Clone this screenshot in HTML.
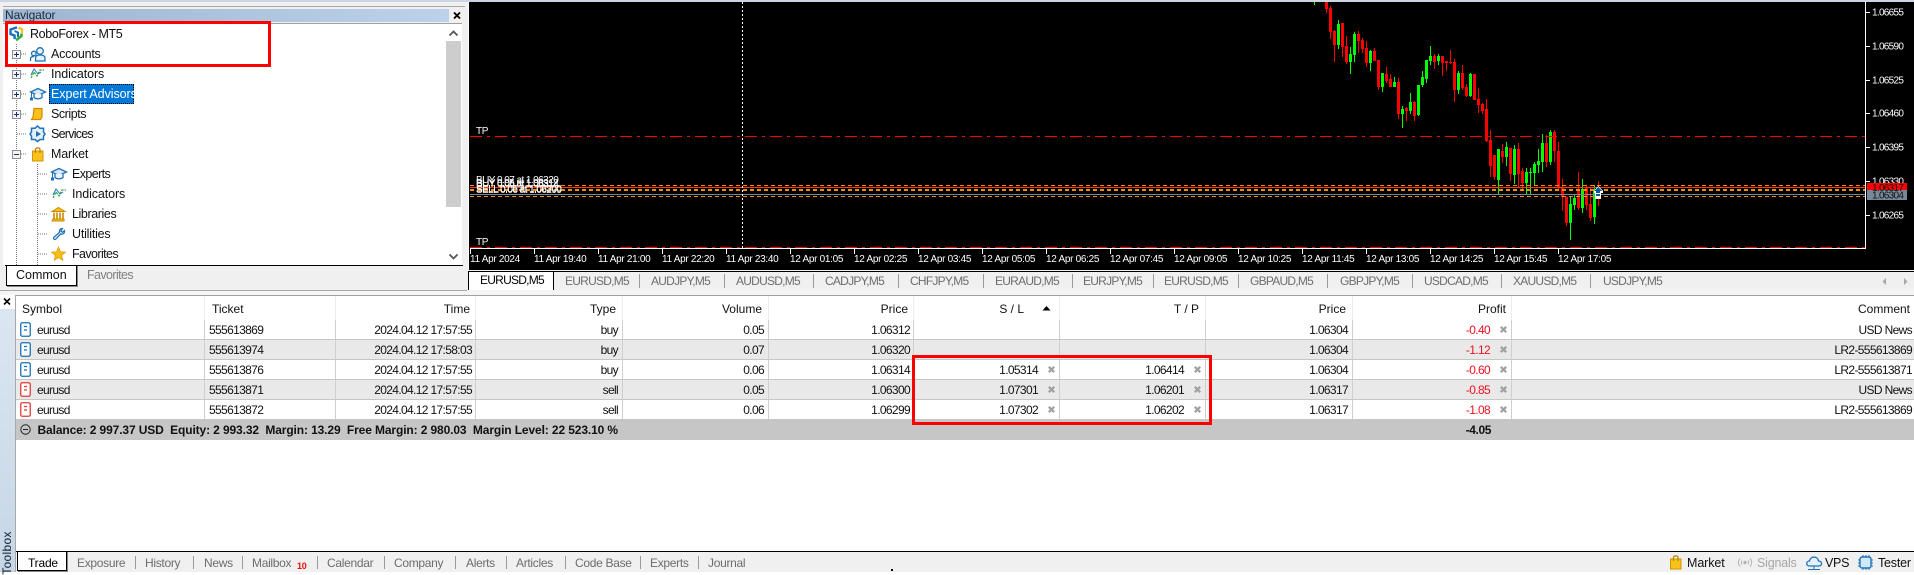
<!DOCTYPE html>
<html><head><meta charset="utf-8"><title>MT5</title>
<style>
html,body{margin:0;padding:0;width:1914px;height:572px;overflow:hidden;background:#fff;font-family:"Liberation Sans",sans-serif;color:#000}
.a{position:absolute}
.t{position:absolute;white-space:nowrap;font-size:12.5px;line-height:20px;letter-spacing:-.1px;color:#111}
.tab{position:absolute;white-space:nowrap;font-size:12px;line-height:18px;top:272px;letter-spacing:-.75px;color:#6d6d6d}
.sep{position:absolute;width:1px;background:#9a9a9a}
.bt{position:absolute;white-space:nowrap;font-size:12px;line-height:18px;top:554px;letter-spacing:-.3px;color:#6d6d6d}
table{position:absolute;left:16px;top:296px;width:1898px;border-collapse:separate;border-spacing:0;table-layout:fixed;font-size:12px;color:#111}
th{font-weight:normal;height:24px;padding:1px 4px 0 0;text-align:right;border-right:1px solid #ececec;background:#fff;box-sizing:border-box}
td{height:20px;padding:1px 4px 0 0;text-align:right;border-right:1px solid #cfcfcf;border-bottom:1px solid #c6c6c6;box-sizing:border-box;position:relative;letter-spacing:-.65px;white-space:nowrap}
tr.g td{background:#e9e9e9}
tr.last td{border-bottom:0;height:19px}
td.l,th.l{text-align:left}
td.x{padding-right:21px}
td.r{color:#f01020}
.x1{position:absolute;right:4px;top:6px;width:7px;height:7px}
.ic{position:absolute;left:4px;top:2px;width:11px;height:15px}
.sum td{background:#c6c6c6;border:0;height:21px;font-weight:bold;overflow:visible}
</style></head><body>

<!-- base chrome -->
<div class="a" style="left:0;top:0;width:1914px;height:2px;background:#ccd5e3"></div>
<div class="a" style="left:0;top:2px;width:468px;height:288px;background:#f0f0f0"></div>
<div class="a" style="left:3px;top:6px;width:462px;height:1px;background:#a8a8a8"></div>
<div class="a" style="left:3px;top:9px;width:446px;height:13px;background:linear-gradient(90deg,#9db5d0,#bcd2ea)"></div>
<div class="t" style="left:5px;top:5px;color:#1a2a3a;letter-spacing:-.1px;font-size:12px">Navigator</div>
<svg class="a" style="left:453px;top:12px" width="8" height="7"><path d="M1 0.5L7 6.5M7 0.5L1 6.5" stroke="#000" stroke-width="1.8"/></svg>
<div class="a" style="left:3px;top:23px;width:459px;height:242px;background:#fff;border-top:1px solid #a0a0a0;box-sizing:border-box"></div>
<div class="a" style="left:446px;top:24px;width:15px;height:241px;background:#fff"></div>
<div class="a" style="left:446px;top:41px;width:15px;height:166px;background:#cdcdcd"></div>
<svg class="a" style="left:448px;top:29px" width="11" height="8"><path d="M1.5 6.5L5.5 2.5L9.5 6.5" fill="none" stroke="#555" stroke-width="1.8"/></svg>
<svg class="a" style="left:448px;top:253px" width="11" height="8"><path d="M1.5 1.5L5.5 5.5L9.5 1.5" fill="none" stroke="#555" stroke-width="1.8"/></svg>
<div class="a" style="left:5px;top:265px;width:458px;height:1px;background:#000"></div>
<div class="a" style="left:6px;top:265px;width:71px;height:21px;background:#fff;border:1px solid #000;border-top:1px solid #000;box-sizing:border-box;box-shadow:1px 1px 0 #888"></div>
<div class="t" style="left:16px;top:265px;letter-spacing:0">Common</div>
<div class="t" style="left:87px;top:265px;color:#808080;letter-spacing:-.6px">Favorites</div>

<!-- nav tree -->
<svg class="a" style="left:0;top:0" width="468" height="290">
<defs>
<g id="plus"><rect x=".5" y=".5" width="8" height="8" fill="#f4f4f4" stroke="#8a8f98"/><path d="M2 4.5H7M4.5 2V7" stroke="#1b2f6a"/></g>
<g id="ind"><path d="M1 11L4 5L7 9L10 3L14 3" fill="none" stroke="#2aa84a" stroke-width="1.2" stroke-dasharray="2.5 1"/><path d="M1 8L4 2L8 7L11 5" fill="none" stroke="#1e74b8" stroke-width="1"/></g>
<g id="hat"><path d="M0.5 5L8 1.5L15.5 5L8 8.5Z" fill="#d5e9f7" stroke="#1f72b8" stroke-width="1.3"/><path d="M4 7V10.5C6 12.3 10 12.3 12 10.5V7" fill="#eef6fc" stroke="#1f72b8" stroke-width="1.3"/><path d="M1.5 5.5V10.5" stroke="#1f72b8"/><rect x="0" y="10.5" width="3" height="3" fill="#1f72b8"/></g>
<g id="bag"><rect x=".5" y="4" width="10.5" height="10" fill="#f9c21a" stroke="#d49400"/><path d="M3.5 6V2.5C3.5 .3 8 .3 8 2.5V6" fill="none" stroke="#b98000" stroke-width="1.2"/></g>
<g id="star"><path d="M6.5 0L8.5 4.7L13.5 5.1L9.7 8.3L10.9 13.4L6.5 10.6L2.1 13.4L3.3 8.3L-.5 5.1L4.5 4.7Z" fill="#f7bd16" stroke="#d79a00" stroke-width=".7"/></g>
</defs>
<path d="M16.5 44V170M16.5 170V265" stroke="#777" stroke-dasharray="1 1"/>
<path d="M37.5 164V265" stroke="#777" stroke-dasharray="1 1"/>
<path d="M21 54H27M21 74H27M21 94H27M21 114H27M17 134H27M21 154H27M38 174H48M38 194H48M38 214H48M38 234H48M38 254H48" stroke="#777" stroke-dasharray="1 1"/>
<use href="#plus" x="12" y="50"/><use href="#plus" x="12" y="70"/><use href="#plus" x="12" y="90"/><use href="#plus" x="12" y="110"/>
<g transform="translate(12 150)"><rect x=".5" y=".5" width="8" height="8" fill="#f4f4f4" stroke="#8a8f98"/><path d="M2 4.5H7" stroke="#1b2f6a"/></g>
<!-- logo -->
<g transform="translate(9 26)" fill="none"><path d="M8 1.2L1.5 3.6V8L5.6 9.6V13" stroke="#1a6fc0" stroke-width="2.4"/><path d="M9.5 1.5L13 3.4V7" stroke="#f4c21f" stroke-width="2.4"/><path d="M12.5 7.5V10L7 14.2" stroke="#2fae3f" stroke-width="2.6"/><path d="M5.5 5L9 6.5V11" stroke="#1a6fc0" stroke-width="2"/></g>
<!-- accounts -->
<g transform="translate(30 47)" fill="#e3f1fb" stroke="#1f72b8" stroke-width="1.3"><circle cx="10" cy="4" r="3.3"/><path d="M5.5 14V11C5.5 8.5 8 8 10 8C12 8 15 8.5 15 11V14Z"/><circle cx="3.8" cy="6.5" r="2.3"/><path d="M.5 14V11.5C.5 10 2 9.5 4 9.5"/></g>
<use href="#ind" x="30" y="67"/>
<use href="#hat" x="30" y="87"/>
<!-- scripts -->
<g transform="translate(31 108)"><path d="M3 .5H11V9L9.5 11.5H.5L2 9Z" fill="#f9c21a" stroke="#d48a00" stroke-width="1.2"/></g>
<!-- services -->
<g transform="translate(30 126)"><path d="M7.5 0L10 2.3H13.5V6L15 8L13.5 10V13.5H10L7.5 15.5L5 13.5H1.5V10L0 8L1.5 6V2.3H5Z" fill="#e3f1fb" stroke="#1f72b8" stroke-width="1.5"/><path d="M6 5L11 8L6 11Z" fill="#1f72b8"/></g>
<use href="#bag" x="32" y="147"/>
<use href="#hat" x="51" y="167"/>
<use href="#ind" x="52" y="187"/>
<!-- libraries -->
<g transform="translate(52 207)" fill="#f9c21a" stroke="#c98a00"><path d="M6.5 .5L13 4.5H0Z"/><path d="M1 12H12V14H0Z"/><path d="M2 5.5V11.5M5 5.5V11.5M8 5.5V11.5M11 5.5V11.5" stroke-width="1.6"/></g>
<!-- utilities -->
<g transform="translate(53 228)"><path d="M9 .5C7 .5 6 2.5 6.5 4.5L.8 9.3C-.2 10.5 1.5 12.3 2.7 11.2L7.8 6C10 6.8 12 5 11.5 2.5L9.5 4.2L7.8 3L9.5 .7Z" fill="#d8ecfa" stroke="#1f72b8" stroke-width="1.2"/></g>
<use href="#star" x="52" y="247"/>
</svg>
<div class="t" style="left:30px;top:24px;letter-spacing:-.37px">RoboForex - MT5</div>
<div class="t" style="left:51px;top:44px;letter-spacing:-.23px">Accounts</div>
<div class="t" style="left:51px;top:64px">Indicators</div>
<div class="a" style="left:49px;top:84px;width:85px;height:20px;background:#0078d7;outline:1px dotted #000;outline-offset:-1px"></div>
<div class="t" style="left:51px;top:84px;color:#fff;letter-spacing:-.07px">Expert Advisors</div>
<div class="t" style="left:51px;top:104px;letter-spacing:-.45px">Scripts</div>
<div class="t" style="left:51px;top:124px;letter-spacing:-.75px">Services</div>
<div class="t" style="left:51px;top:144px;letter-spacing:-.17px">Market</div>
<div class="t" style="left:72px;top:164px;letter-spacing:-.6px">Experts</div>
<div class="t" style="left:72px;top:184px">Indicators</div>
<div class="t" style="left:72px;top:204px;letter-spacing:-.4px">Libraries</div>
<div class="t" style="left:72px;top:224px;letter-spacing:-.2px">Utilities</div>
<div class="t" style="left:72px;top:244px;letter-spacing:-.6px">Favorites</div>
<div class="a" style="left:5px;top:21px;width:266px;height:46px;border:3px solid #f00;box-sizing:border-box"></div>

<!-- chart -->
<svg class="a" style="left:469px;top:2px" width="1445" height="268" viewBox="469 2 1445 268" font-family="Liberation Sans, sans-serif">
<rect x="469" y="2" width="1445" height="268" fill="#000"/>
<g shape-rendering="crispEdges" fill="none">
<g stroke="#f00" stroke-width="1">
<path d="M1326.5 0V13M1330.5 6V39M1334.5 30V62M1342.5 23V57M1346.5 36V64M1358.5 31V53M1362.5 38V53M1366.5 41V67M1374.5 48V61M1378.5 60V90M1386.5 67V83M1390.5 74V87M1398.5 78V119M1406.5 107V121M1414.5 101V121M1434.5 54V69M1442.5 56V76M1446.5 61V71M1450.5 50V64M1454.5 59V102M1462.5 65V90M1466.5 84V97M1474.5 74V100M1478.5 88V113M1482.5 103V114M1486.5 99V142M1490.5 130V177M1494.5 155V180M1502.5 144V163M1510.5 148V181M1518.5 143V187M1522.5 168V189M1546.5 135V167M1554.5 130V162M1558.5 142V189M1562.5 179V211M1566.5 197V226M1578.5 172V210M1586.5 186V210M1590.5 187V221M1598.5 181V206"/>
</g>
<g stroke="#f00" stroke-width="3">
<path d="M1326.5 0V9M1330.5 8V32M1334.5 31V45M1342.5 23V47M1346.5 46V62M1358.5 34V41M1362.5 40V49M1366.5 48V63M1374.5 51V61M1378.5 60V87M1386.5 74V81M1390.5 79V87M1398.5 82V114M1406.5 108V111M1414.5 102V116M1434.5 56V62M1442.5 56V63M1446.5 61V63M1450.5 62V63M1454.5 62V90M1462.5 73V88M1466.5 87V96M1474.5 74V100M1478.5 99V105M1482.5 104V111M1486.5 109V141M1490.5 140V166M1494.5 155V177M1502.5 151V157M1510.5 148V174M1518.5 149V174M1522.5 171V183M1546.5 143V162M1554.5 132V151M1558.5 151V188M1562.5 188V197M1566.5 197V223M1578.5 189V208M1586.5 187V205M1590.5 204V218"/>
</g>
<g stroke="#0f0" stroke-width="1">
<path d="M1314.5 2V5M1338.5 20V49M1350.5 47V74M1354.5 32V62M1370.5 50V71M1382.5 73V92M1394.5 77V87M1402.5 106V128M1410.5 93V114M1418.5 85V116M1422.5 71V87M1426.5 60V83M1430.5 46V65M1438.5 54V65M1458.5 71V94M1470.5 73V97M1498.5 149V194M1506.5 142V166M1514.5 145V184M1526.5 168V194M1530.5 168V194M1534.5 162V185M1538.5 149V173M1542.5 134V172M1550.5 130V165M1570.5 197V240M1574.5 194V210M1582.5 179V213M1594.5 185V224"/>
</g>
<g stroke="#0f0" stroke-width="3">
<path d="M1338.5 24V45M1350.5 54V62M1354.5 34V55M1370.5 51V63M1382.5 73V87M1394.5 82V87M1402.5 109V114M1410.5 102V111M1418.5 85V115M1422.5 77V85M1426.5 60V79M1430.5 56V61M1438.5 56V61M1458.5 73V90M1470.5 74V96M1498.5 149V180M1506.5 147V157M1514.5 149V175M1526.5 172V183M1530.5 172V173M1534.5 164V173M1538.5 161V165M1542.5 143V162M1550.5 132V162M1570.5 204V223M1574.5 198V205M1582.5 189V208M1594.5 189V217"/>
</g>
<!-- lines -->
<path d="M470 136.5H1865M470 247.5H1865" stroke="#f00" stroke-dasharray="12 5 3 5"/>
<path d="M470 185.5H1865M470 196.5H1865" stroke="#ff8c00" stroke-dasharray="4 3"/>
<path d="M470 187.5H1865" stroke="#ff3a00"/>
<path d="M470 190H1865" stroke="#ff8c00" stroke-width="2" stroke-dasharray="4 3"/>
<path d="M470 194.5H1865" stroke="#778899"/>
<path d="M742.5 2V248" stroke="#fff" stroke-dasharray="2 2"/>
<!-- axes -->
<path d="M470 248.5H1865.5M1865.5 2V249" stroke="#fff"/>
<path d="M470.5 249V254M534.5 249V254M598.5 249V254M662.5 249V254M726.5 249V254M790.5 249V254M854.5 249V254M918.5 249V254M982.5 249V254M1046.5 249V254M1110.5 249V254M1174.5 249V254M1238.5 249V254M1302.5 249V254M1366.5 249V254M1430.5 249V254M1494.5 249V254M1558.5 249V254" stroke="#fff"/>
<path d="M1866 12.5H1870M1866 46.5H1870M1866 80.5H1870M1866 113.5H1870M1866 147.5H1870M1866 181.5H1870M1866 215.5H1870" stroke="#fff"/>
</g>
<g fill="#fff" font-size="10" letter-spacing="-.3">
<text x="470" y="262">11 Apr 2024</text><text x="534" y="262">11 Apr 19:40</text><text x="598" y="262">11 Apr 21:00</text><text x="662" y="262">11 Apr 22:20</text><text x="726" y="262">11 Apr 23:40</text><text x="790" y="262">12 Apr 01:05</text><text x="854" y="262">12 Apr 02:25</text><text x="918" y="262">12 Apr 03:45</text><text x="982" y="262">12 Apr 05:05</text><text x="1046" y="262">12 Apr 06:25</text><text x="1110" y="262">12 Apr 07:45</text><text x="1174" y="262">12 Apr 09:05</text><text x="1238" y="262">12 Apr 10:25</text><text x="1302" y="262">12 Apr 11:45</text><text x="1366" y="262">12 Apr 13:05</text><text x="1430" y="262">12 Apr 14:25</text><text x="1494" y="262">12 Apr 15:45</text><text x="1558" y="262">12 Apr 17:05</text>
<g letter-spacing="-.7"><text x="1872" y="15.5">1.06655</text><text x="1872" y="49.5">1.06590</text><text x="1872" y="83.5">1.06525</text><text x="1872" y="116.5">1.06460</text><text x="1872" y="150.5">1.06395</text><text x="1872" y="184.5">1.06330</text><text x="1872" y="218.5">1.06265</text></g>
<text x="476" y="134">TP</text><text x="476" y="245">TP</text>
<g letter-spacing="-.55"><text x="476" y="183">BUY 0.07 at 1.06320</text><text x="476" y="186">BUY 0.05 at 1.06312</text><text x="476" y="187">BUY 0.06 at 1.06314</text><text x="476" y="192">SELL 0.05 at 1.06300</text><text x="476" y="193">SELL 0.06 at 1.06299</text></g>
</g>
<rect x="1867" y="183" width="40" height="8" fill="#f00"/>
<rect x="1867" y="190" width="40" height="10" fill="#778899"/>
<text x="1872" y="191" fill="#111" font-size="10" letter-spacing="-.7">1.06317</text>
<text x="1872" y="198.5" fill="#111" font-size="10" letter-spacing="-.7">1.06304</text>
<!-- marker -->
<g shape-rendering="crispEdges"><path d="M1598 186L1603 191V193H1601V199H1595V193H1594V191Z" fill="#fff"/><path d="M1598 187L1602 191H1600V193H1596V191H1594.5Z" fill="#0b5a96"/><rect x="1596" y="194" width="4" height="2" fill="#0b5a96"/></g>
</svg>

<!-- chart tabs -->
<div class="a" style="left:468px;top:270px;width:1446px;height:20px;background:#f0f0f0"></div>
<div class="a" style="left:468px;top:271px;width:1446px;height:1px;background:#000"></div>
<div class="a" style="left:468px;top:271px;width:86px;height:19px;background:#fff;border-top:1px solid #000;border-right:1px solid #000;border-left:1px solid #000;box-sizing:border-box"></div>
<div class="tab" style="left:480px;color:#000;top:271px">EURUSD,M5</div>
<div class="tab" style="left:565px">EURUSD,M5</div><div class="sep" style="left:639px;top:274px;height:14px"></div>
<div class="tab" style="left:651px">AUDJPY,M5</div><div class="sep" style="left:724px;top:274px;height:14px"></div>
<div class="tab" style="left:736px">AUDUSD,M5</div><div class="sep" style="left:813px;top:274px;height:14px"></div>
<div class="tab" style="left:825px">CADJPY,M5</div><div class="sep" style="left:898px;top:274px;height:14px"></div>
<div class="tab" style="left:910px">CHFJPY,M5</div><div class="sep" style="left:983px;top:274px;height:14px"></div>
<div class="tab" style="left:995px">EURAUD,M5</div><div class="sep" style="left:1072px;top:274px;height:14px"></div>
<div class="tab" style="left:1083px">EURJPY,M5</div><div class="sep" style="left:1153px;top:274px;height:14px"></div>
<div class="tab" style="left:1164px">EURUSD,M5</div><div class="sep" style="left:1238px;top:274px;height:14px"></div>
<div class="tab" style="left:1250px">GBPAUD,M5</div><div class="sep" style="left:1327px;top:274px;height:14px"></div>
<div class="tab" style="left:1340px">GBPJPY,M5</div><div class="sep" style="left:1412px;top:274px;height:14px"></div>
<div class="tab" style="left:1424px">USDCAD,M5</div><div class="sep" style="left:1501px;top:274px;height:14px"></div>
<div class="tab" style="left:1513px">XAUUSD,M5</div><div class="sep" style="left:1590px;top:274px;height:14px"></div>
<div class="tab" style="left:1603px">USDJPY,M5</div>
<svg class="a" style="left:1881px;top:277px" width="28" height="9"><path d="M5 1L1.5 4.5L5 8Z M23 1L26.5 4.5L23 8Z" fill="#a8a8a8"/></svg>

<!-- toolbox -->
<div class="a" style="left:0;top:290px;width:1914px;height:5px;background:#f5f5f5"></div>
<div class="a" style="left:0;top:290px;width:467px;height:1px;background:#a8a8a8"></div>
<div class="a" style="left:16px;top:295px;width:1898px;height:1px;background:#a0a0a0"></div>
<div class="a" style="left:15px;top:295px;width:1px;height:277px;background:#a8a8a8"></div>
<div class="a" style="left:0;top:295px;width:15px;height:14px;background:#fff"></div>
<div class="a" style="left:0;top:309px;width:15px;height:263px;background:linear-gradient(180deg,#dbe6f2,#c6d6e6)"></div>
<svg class="a" style="left:3px;top:298px" width="8" height="7"><path d="M1 0.5L7 6.5M7 0.5L1 6.5" stroke="#000" stroke-width="1.6"/></svg>
<div class="a" style="left:-15px;top:546px;width:44px;height:14px;line-height:14px;font-size:12px;letter-spacing:.3px;color:#0f1f2f;transform:rotate(-90deg);text-align:center;white-space:nowrap">Toolbox</div>

<svg width="0" height="0" style="position:absolute"><defs>
<symbol id="xx" viewBox="0 0 7 7"><path d="M.8 .8L6.2 6.2M6.2 .8L.8 6.2" stroke="#a0a0a0" stroke-width="2.2"/></symbol>
<symbol id="bu" viewBox="0 0 11 15"><rect x=".75" y=".75" width="9.5" height="13.5" rx="1.5" fill="#fff" stroke="#1b6fb3" stroke-width="1.3"/><path d="M4 4.5H7M4 8H7" stroke="#1b6fb3" stroke-width="1.2"/></symbol>
<symbol id="se" viewBox="0 0 11 15"><rect x=".75" y=".75" width="9.5" height="13.5" rx="1.5" fill="#fff" stroke="#e23a36" stroke-width="1.3"/><path d="M4 4.5H7M4 8H7" stroke="#e23a36" stroke-width="1.2"/></symbol>
</defs></svg>

<table>
<colgroup><col style="width:189px"><col style="width:131px"><col style="width:140px"><col style="width:147px"><col style="width:146px"><col style="width:145px"><col style="width:146px"><col style="width:146px"><col style="width:147px"><col style="width:159px"><col></colgroup>
<tr><th class="l" style="padding-left:6px">Symbol</th><th class="l" style="padding-left:7px">Ticket</th><th style="padding-right:5px">Time</th><th style="padding-right:6px">Type</th><th style="padding-right:6px">Volume</th><th style="padding-right:5px">Price</th><th style="padding-right:35px">S / L</th><th style="padding-right:6px">T / P</th><th style="padding-right:6px">Price</th><th style="padding-right:5px">Profit</th><th style="padding-right:4px;border-right:0">Comment</th></tr>
<tr><td class="l" style="padding-left:21px"><svg class="ic"><use href="#bu"/></svg>eurusd</td><td class="l" style="padding-left:4px">555613869</td><td style="padding-right:3px">2024.04.12 17:57:55</td><td>buy</td><td>0.05</td><td style="padding-right:3px">1.06312</td><td class="x"></td><td class="x"></td><td>1.06304</td><td class="x r">-0.40<svg class="x1"><use href="#xx"/></svg></td><td style="padding-right:2px;border-right:0">USD News</td></tr>
<tr class="g"><td class="l" style="padding-left:21px"><svg class="ic"><use href="#bu"/></svg>eurusd</td><td class="l" style="padding-left:4px">555613974</td><td style="padding-right:3px">2024.04.12 17:58:03</td><td>buy</td><td>0.07</td><td style="padding-right:3px">1.06320</td><td class="x"></td><td class="x"></td><td>1.06304</td><td class="x r">-1.12<svg class="x1"><use href="#xx"/></svg></td><td style="padding-right:2px;border-right:0">LR2-555613869</td></tr>
<tr><td class="l" style="padding-left:21px"><svg class="ic"><use href="#bu"/></svg>eurusd</td><td class="l" style="padding-left:4px">555613876</td><td style="padding-right:3px">2024.04.12 17:57:55</td><td>buy</td><td>0.06</td><td style="padding-right:3px">1.06314</td><td class="x">1.05314<svg class="x1"><use href="#xx"/></svg></td><td class="x">1.06414<svg class="x1"><use href="#xx"/></svg></td><td>1.06304</td><td class="x r">-0.60<svg class="x1"><use href="#xx"/></svg></td><td style="padding-right:2px;border-right:0">LR2-555613871</td></tr>
<tr class="g"><td class="l" style="padding-left:21px"><svg class="ic"><use href="#se"/></svg>eurusd</td><td class="l" style="padding-left:4px">555613871</td><td style="padding-right:3px">2024.04.12 17:57:55</td><td>sell</td><td>0.05</td><td style="padding-right:3px">1.06300</td><td class="x">1.07301<svg class="x1"><use href="#xx"/></svg></td><td class="x">1.06201<svg class="x1"><use href="#xx"/></svg></td><td>1.06317</td><td class="x r">-0.85<svg class="x1"><use href="#xx"/></svg></td><td style="padding-right:2px;border-right:0">USD News</td></tr>
<tr class="last"><td class="l" style="padding-left:21px"><svg class="ic"><use href="#se"/></svg>eurusd</td><td class="l" style="padding-left:4px">555613872</td><td style="padding-right:3px">2024.04.12 17:57:55</td><td>sell</td><td>0.06</td><td style="padding-right:3px">1.06299</td><td class="x">1.07302<svg class="x1"><use href="#xx"/></svg></td><td class="x">1.06202<svg class="x1"><use href="#xx"/></svg></td><td>1.06317</td><td class="x r">-1.08<svg class="x1"><use href="#xx"/></svg></td><td style="padding-right:2px;border-right:0">LR2-555613869</td></tr>
<tr class="sum"><td colspan="9" class="l" style="padding-left:21.5px;letter-spacing:-.12px">Balance: 2 997.37 USD&nbsp; Equity: 2 993.32&nbsp; Margin: 13.29&nbsp; Free Margin: 2 980.03&nbsp; Margin Level: 22 523.10 %</td><td class="x" style="letter-spacing:-.4px">-4.05</td><td></td></tr>
</table>
<svg class="a" style="left:1042px;top:306px" width="9" height="5"><path d="M4.5 0L8.5 4.5H.5Z" fill="#000"/></svg>
<svg class="a" style="left:20px;top:424px" width="11" height="11"><circle cx="5.5" cy="5.5" r="4.7" fill="none" stroke="#222" stroke-width="1"/><path d="M3 5.5H8" stroke="#222" stroke-width="1"/></svg>
<div class="a" style="left:912px;top:355px;width:300px;height:70px;border:3px solid #f00;box-sizing:border-box"></div>

<!-- bottom tabs -->
<div class="a" style="left:16px;top:551px;width:1898px;height:21px;background:#f0f0f0;border-top:1px solid #000;box-sizing:border-box"></div>
<div class="a" style="left:17px;top:551px;width:50px;height:20px;background:#fff;border:1px solid #000;box-sizing:border-box;box-shadow:1px 1px 0 #888"></div>
<div class="bt" style="left:28px;color:#000;letter-spacing:-.2px">Trade</div>
<div class="bt" style="left:77px">Exposure</div><div class="sep" style="left:135px;top:556px;height:13px"></div>
<div class="bt" style="left:145px">History</div><div class="sep" style="left:193px;top:556px;height:13px"></div>
<div class="bt" style="left:204px">News</div><div class="sep" style="left:242px;top:556px;height:13px"></div>
<div class="bt" style="left:252px">Mailbox</div>
<div class="a" style="left:297px;top:561px;font-size:9px;font-weight:bold;color:#e81010;line-height:11px;letter-spacing:-.2px">10</div>
<div class="sep" style="left:317px;top:556px;height:13px"></div>
<div class="bt" style="left:327px">Calendar</div><div class="sep" style="left:384px;top:556px;height:13px"></div>
<div class="bt" style="left:394px">Company</div><div class="sep" style="left:455px;top:556px;height:13px"></div>
<div class="bt" style="left:466px">Alerts</div><div class="sep" style="left:506px;top:556px;height:13px"></div>
<div class="bt" style="left:516px">Articles</div><div class="sep" style="left:565px;top:556px;height:13px"></div>
<div class="bt" style="left:575px">Code Base</div><div class="sep" style="left:640px;top:556px;height:13px"></div>
<div class="bt" style="left:650px">Experts</div><div class="sep" style="left:698px;top:556px;height:13px"></div>
<div class="bt" style="left:708px">Journal</div>
<div class="a" style="left:891px;top:569px;width:2px;height:2px;background:#000"></div>

<svg class="a" style="left:1668px;top:554px" width="240" height="18">
<g transform="translate(2 1)"><rect x=".5" y="4" width="10.5" height="10" fill="#f9c21a" stroke="#d49400"/><path d="M3.5 6V2.5C3.5 .3 8 .3 8 2.5V6" fill="none" stroke="#b98000" stroke-width="1.2"/></g>
<g fill="none" stroke="#b4b4b4" transform="translate(69 3)"><path d="M3 1.5C.8 4 .8 7 3 9.5M13 1.5C15.2 4 15.2 7 13 9.5"/><path d="M5 3.5C4 5 4 6 5 7.5M11 3.5C12 5 12 6 11 7.5"/><circle cx="8" cy="5.5" r="1.2" fill="#b4b4b4"/></g>
<g transform="translate(138 1)" fill="#e3f1fb" stroke="#1f72b8" stroke-width="1.3"><path d="M3.5 11C-.5 11 0 6 3.5 6C4.5 .5 12 1 12.5 6C16.5 6 16.5 11 13 11Z"/><path d="M8 11V14M2 14.5H14" fill="none" stroke-width="1"/></g>
<g transform="translate(190 1)"><rect x="2" y="2" width="11" height="11" rx="2" fill="#cfe8fa" stroke="#1f72b8" stroke-width="1.4"/><path d="M5 0V2M8 0V2M11 0V2M5 13V15M8 13V15M11 13V15M0 5H2M0 8H2M0 11H2M13 5H15M13 8H15M13 11H15" stroke="#1f72b8"/></g>
</svg>
<div class="bt" style="left:1687px;color:#111;font-size:12.5px;letter-spacing:-.1px">Market</div>
<div class="bt" style="left:1757px;color:#a8a8a8;font-size:12.5px;letter-spacing:-.2px">Signals</div>
<div class="bt" style="left:1825px;color:#111;font-size:12.5px;letter-spacing:-.3px">VPS</div>
<div class="bt" style="left:1878px;color:#111;font-size:12.5px;letter-spacing:-.2px">Tester</div>
</body></html>
